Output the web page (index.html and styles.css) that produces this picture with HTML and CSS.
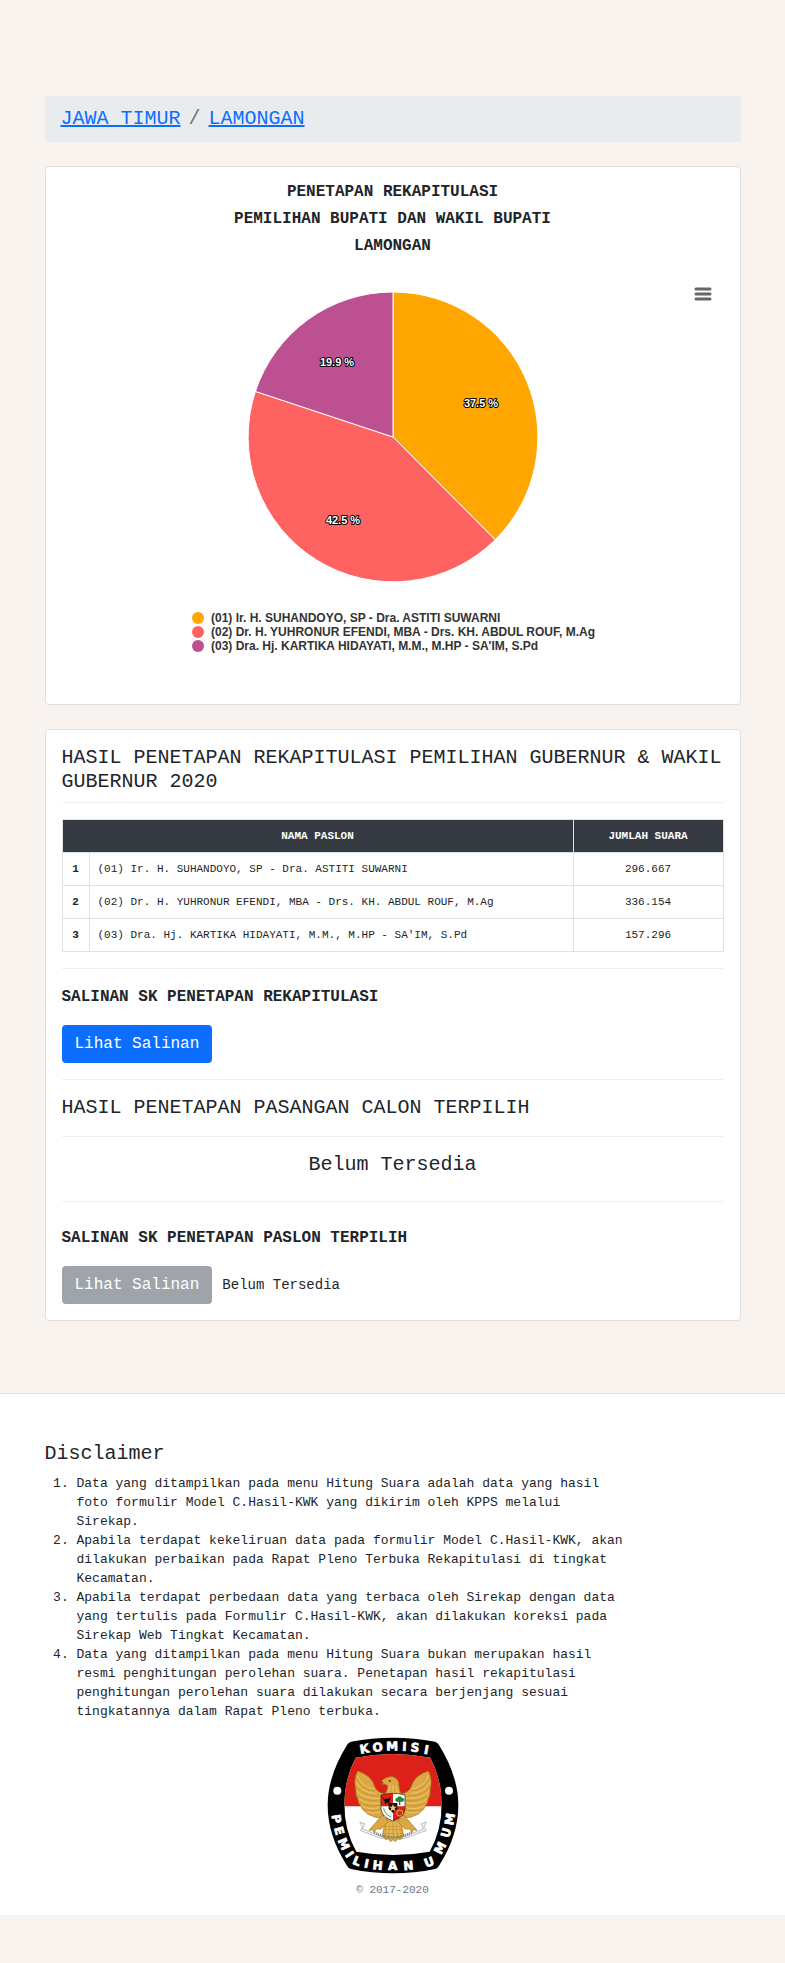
FILE: index.html
```html
<!DOCTYPE html>
<html lang="id">
<head>
<meta charset="utf-8">
<meta name="viewport" content="width=device-width, initial-scale=1">
<title>Penetapan Rekapitulasi - Lamongan</title>
<link rel="stylesheet" href="styles.css">
</head>
<body>
<main class="container main">
  <nav aria-label="breadcrumb">
    <ol class="breadcrumb">
      <li class="breadcrumb-item"><a href="#">JAWA TIMUR</a></li>
      <li class="breadcrumb-item"><a href="#">LAMONGAN</a></li>
    </ol>
  </nav>

  <section class="card">
    <div class="chart-titles">
      <h2 class="chart-title">PENETAPAN REKAPITULASI</h2>
      <h2 class="chart-title">PEMILIHAN BUPATI DAN WAKIL BUPATI</h2>
      <h2 class="chart-title">LAMONGAN</h2>
    </div>
    <div class="chart">
      <button class="chart-menu" type="button" aria-label="Menu grafik">
        <svg width="18" height="14" viewBox="0 0 18 14" stroke="#666" stroke-width="3" stroke-linecap="round"><path d="M2 2H16M2 7H16M2 12H16"/></svg>
      </button>
      <svg class="pie" width="292" height="292" viewBox="-146 -146 292 292" role="img" aria-label="Diagram perolehan suara">
        <g stroke="#fff" stroke-width="1" stroke-linejoin="round">
          <path fill="#ffa600" d="M0 0V-145A145 145 0 0 1 102.2 102.8Z"/>
          <path fill="#ff6361" d="M0 0L102.2 102.8A145 145 0 0 1 -137.6 -45.6Z"/>
          <path fill="#bc5090" d="M0 0L-137.6 -45.6A145 145 0 0 1 0 -145Z"/>
        </g>
        <g class="pie-label">
          <text x="88" y="-30">37.5 %</text>
          <text x="-50" y="87">42.5 %</text>
          <text x="-56" y="-71">19.9 %</text>
        </g>
      </svg>
      <ul class="legend">
        <li><span class="dot dot-1"></span>(01) Ir. H. SUHANDOYO, SP - Dra. ASTITI SUWARNI</li>
        <li><span class="dot dot-2"></span>(02) Dr. H. YUHRONUR EFENDI, MBA - Drs. KH. ABDUL ROUF, M.Ag</li>
        <li><span class="dot dot-3"></span>(03) Dra. Hj. KARTIKA HIDAYATI, M.M., M.HP - SA'IM, S.Pd</li>
      </ul>
    </div>
  </section>

  <section class="card">
    <h3 class="title">HASIL PENETAPAN REKAPITULASI PEMILIHAN GUBERNUR &amp; WAKIL GUBERNUR 2020</h3>
    <hr>
    <table class="votes">
      <colgroup><col class="col-no"><col><col class="col-total"></colgroup>
      <thead>
        <tr><th colspan="2" scope="col">NAMA PASLON</th><th scope="col">JUMLAH SUARA</th></tr>
      </thead>
      <tbody>
        <tr><th scope="row">1</th><td>(01) Ir. H. SUHANDOYO, SP - Dra. ASTITI SUWARNI</td><td class="total">296.667</td></tr>
        <tr><th scope="row">2</th><td>(02) Dr. H. YUHRONUR EFENDI, MBA - Drs. KH. ABDUL ROUF, M.Ag</td><td class="total">336.154</td></tr>
        <tr><th scope="row">3</th><td>(03) Dra. Hj. KARTIKA HIDAYATI, M.M., M.HP - SA'IM, S.Pd</td><td class="total">157.296</td></tr>
      </tbody>
    </table>
    <hr>
    <h4 class="subtitle">SALINAN SK PENETAPAN REKAPITULASI</h4>
    <div class="actions"><button class="btn" type="button">Lihat Salinan</button></div>
    <hr>
    <h3 class="title title-spaced">HASIL PENETAPAN PASANGAN CALON TERPILIH</h3>
    <hr>
    <p class="empty">Belum Tersedia</p>
    <hr>
    <h4 class="subtitle subtitle-spaced">SALINAN SK PENETAPAN PASLON TERPILIH</h4>
    <div class="actions">
      <button class="btn btn-secondary" type="button" disabled>Lihat Salinan</button>
      <span class="note">Belum Tersedia</span>
    </div>
  </section>
</main>

<footer class="footer">
  <div class="container">
    <h3 class="footer-title">Disclaimer</h3>
    <ol class="disclaimer">
      <li>Data yang ditampilkan pada menu Hitung Suara adalah data yang hasil foto formulir Model C.Hasil-KWK yang dikirim oleh KPPS melalui Sirekap.</li>
      <li>Apabila terdapat kekeliruan data pada formulir Model C.Hasil-KWK, akan dilakukan perbaikan pada Rapat Pleno Terbuka Rekapitulasi di tingkat Kecamatan.</li>
      <li>Apabila terdapat perbedaan data yang terbaca oleh Sirekap dengan data yang tertulis pada Formulir C.Hasil-KWK, akan dilakukan koreksi pada Sirekap Web Tingkat Kecamatan.</li>
      <li>Data yang ditampilkan pada menu Hitung Suara bukan merupakan hasil resmi penghitungan perolehan suara. Penetapan hasil rekapitulasi penghitungan perolehan suara dilakukan secara berjenjang sesuai tingkatannya dalam Rapat Pleno terbuka.</li>
    </ol>
    <div class="brand">
      <svg width="132" height="137" viewBox="20 22 396 411" role="img" aria-label="Komisi Pemilihan Umum">
        <defs>
          <clipPath id="inner"><path d="M106 84Q218 62 330 84Q364 150 364 226Q364 302 328 366Q218 386 108 366Q72 302 72 226Q72 150 106 84Z"/></clipPath>
          <clipPath id="shield"><path d="M182 196Q218 186 254 196V238Q252 262 218 274Q184 262 182 238Z"/></clipPath>
        </defs>
        <path d="M92 36Q218 12 344 36Q352 38 356 46Q414 140 414 226Q414 318 356 408Q352 416 344 418Q218 444 92 418Q84 416 80 408Q22 318 22 226Q22 140 80 46Q84 38 92 36Z"/>
        <g clip-path="url(#inner)">
          <path fill="#fff" d="M60 60H380V400H60Z"/>
          <path fill="#dc2118" d="M60 60H380V230H60Z"/>
        </g>
        <circle cx="51" cy="183" r="12" fill="#fff"/>
        <circle cx="386" cy="183" r="12" fill="#fff"/>
        <g class="logo-text">
          <text x="120.4 157.9 198 244.8 269.5 309.6" y="72.2 66.9 62.8 63.2 65.1 71.2" rotate="-10 -6 -1 3 6 10">KOMISI</text>
          <text x="33.5 40.8 51.7 73.1 94.3 129.2 155.6 202.9 250 290 317.3 362 385.2 398.3" y="257 295.3 331.6 375.8 401.5 412.9 417.9 422.5 421.6 415 414.4 376.9 326.7 287.9" rotate="80 74 66 56 22 12 6 0 -5 -10 -20 -62 -74 -80">PEMILIHAN UMUM</text>
        </g>
        <!-- ribbon -->
        <path d="M118 277L134 283L126 298L142 304Q218 344 294 304L310 298L302 283L318 277L311 292L318 303L296 310Q218 350 140 310L120 303L127 290Z" fill="#f4f4f4" stroke="#9aa3a8" stroke-width="2"/>
        <!-- wings, tail and legs -->
        <g fill="#dba842" stroke="#a8741c" stroke-width="2" stroke-linejoin="round">
          <path d="M112 124Q98 150 107 182Q104 196 113 208Q112 220 122 230Q124 240 136 247Q142 256 154 258Q162 264 178 264L192 258L194 192Q170 190 162 168Q154 138 112 124Z"/>
          <path d="M324 124Q338 150 329 182Q332 196 323 208Q324 220 314 230Q312 240 300 247Q294 256 282 258Q274 264 258 264L244 258L242 192Q266 190 274 168Q282 138 324 124Z"/>
          <path d="M196 266L186 318L196 330L206 326L210 336L218 330L226 336L230 326L240 330L250 318L240 266Z"/>
          <path d="M186 256L158 288L146 302L158 300L160 308L168 298L182 298L204 276Z"/>
          <path d="M250 256L278 288L290 302L278 300L276 308L268 298L254 298L232 276Z"/>
          <path d="M184 164L190 160L184 154Q196 140 216 141Q236 146 236 168Q236 184 246 198Q218 208 190 198Q202 184 202 168L194 164Z"/>
        </g>
        <g fill="none" stroke="#f4d789" stroke-width="2">
          <path d="M112 138Q120 170 160 178M108 156Q120 188 166 192M108 182Q128 208 178 206M114 206Q138 226 178 220M124 228Q148 242 178 234M140 246Q160 254 180 246"/>
          <path d="M324 138Q316 170 276 178M328 156Q316 188 270 192M328 182Q308 208 258 206M322 206Q298 226 258 220M312 228Q288 242 258 234M296 246Q276 254 256 246"/>
          <path d="M204 280L198 324M213 280L210 328M223 280L226 328M232 280L238 324M210 168L204 190M218 166V194M226 168L232 190"/>
        </g>
        <g fill="none" stroke="#a8741c" stroke-width="1">
          <path d="M110 146Q120 178 162 184M106 170Q124 198 172 199M112 196Q132 216 178 213M118 218Q144 234 178 227M130 238Q152 250 180 240"/>
          <path d="M326 146Q316 178 274 184M330 170Q312 198 264 199M324 196Q304 216 258 213M318 218Q292 234 258 227M306 238Q284 250 256 240"/>
          <path d="M190 300H246M188 312H248M198 290H238"/>
        </g>
        <circle cx="208" cy="154" r="3" fill="#5b3608"/>
        <!-- shield -->
        <g clip-path="url(#shield)">
          <path fill="#fff" d="M180 186H256V276H180Z"/>
          <path fill="#dc2118" d="M180 186H218V230H180ZM218 230H256V276H218Z"/>
          <path fill="#16100c" d="M186 202L192 208L198 206L202 209L212 202L208 212L206 222L200 218L196 226L192 214Z"/>
          <path fill="#6b4420" d="M236 214H240V226H236Z"/>
          <path fill="#258b3c" d="M226 214Q222 206 231 204Q238 196 245 204Q254 206 250 214Q244 219 238 215Q231 219 226 214Z"/>
          <circle cx="238" cy="250" r="9" fill="none" stroke="#e8b93c" stroke-width="3"/>
          <path d="M190 236Q194 254 212 262" fill="none" stroke="#58a04b" stroke-width="4" stroke-dasharray="4 2"/>
          <path d="M205 220H231V238L218 250L205 238Z" fill="#111"/>
          <path d="M218 222L221 231H230L223 236L226 245L218 240L210 245L213 236L206 231H215Z" fill="#f2cf55"/>
        </g>
        <path d="M182 196Q218 186 254 196V238Q252 262 218 274Q184 262 182 238Z" fill="none" stroke="#1d1a18" stroke-width="2"/>
        <path d="M162 308Q218 338 274 308" fill="none" stroke="#6b6b6b" stroke-width="7" stroke-dasharray="3 3"/>
      </svg>
    </div>
    <p class="copyright">© 2017-2020</p>
  </div>
</footer>
</body>
</html>
```
FILE: styles.css
```css
*,
*::before,
*::after {
  box-sizing: border-box;
}

body {
  margin: 0;
  background: #f8f3ef;
  color: #212529;
  font-family: "Liberation Mono", "Courier New", monospace;
  font-size: 16px;
  line-height: 24px;
}

h2,
h3,
h4,
p,
ol,
ul {
  margin: 0;
  padding: 0;
}

.container {
  max-width: 720px;
  margin: 0 auto;
  padding: 0 12px;
}

.main {
  padding-top: 96px;
  padding-bottom: 72px;
  display: flex;
  flex-direction: column;
  gap: 24px;
}

.breadcrumb {
  display: flex;
  flex-wrap: wrap;
  padding: 8px 16px;
  list-style: none;
  background: #e9ecef;
  border-radius: 4px;
  font-size: 20px;
  line-height: 30px;
}

.breadcrumb-item + .breadcrumb-item::before {
  content: "/";
  padding: 0 8px;
  color: #6c757d;
}

.breadcrumb a {
  color: #0d6efd;
  text-decoration: underline;
}

.card {
  padding: 16px;
  background: #fff;
  border: 1px solid #dfdfdf;
  border-radius: 4px;
}

.chart-title {
  margin-bottom: 8px;
  font-size: 16px;
  line-height: 19px;
  text-align: center;
}

.chart {
  position: relative;
  display: flex;
  flex-direction: column;
  align-items: center;
  gap: 28px;
  padding: 27px 0 35px;
  font-family: "Liberation Sans", Arial, sans-serif;
}

.chart-menu {
  position: absolute;
  top: 20px;
  right: 9px;
  display: flex;
  align-items: center;
  justify-content: center;
  width: 24px;
  height: 20px;
  padding: 0;
  border: 0;
  background: transparent;
}

.pie {
  display: block;
}

.pie-label {
  fill: #fff;
  stroke: #000;
  stroke-width: 2px;
  stroke-linejoin: round;
  paint-order: stroke;
  font-size: 11px;
  font-weight: 700;
  text-anchor: middle;
}

.legend {
  padding-left: 2px;
  list-style: none;
  color: #333;
  font-size: 12px;
  font-weight: 700;
  line-height: 14px;
}

.legend li {
  display: flex;
  align-items: center;
  gap: 7px;
}

.dot {
  width: 12px;
  height: 12px;
  flex: none;
  border-radius: 50%;
}

.dot-1 {
  background: #ffa600;
}

.dot-2 {
  background: #ff6361;
}

.dot-3 {
  background: #bc5090;
}

.title,
.footer-title {
  margin-bottom: 8px;
  font-size: 20px;
  font-weight: 400;
  line-height: 24px;
}

.title-spaced {
  margin-bottom: 16px;
}

hr {
  height: 1px;
  margin: 0 0 16px;
  border: 0;
  background: #f0f0f1;
}

.votes {
  width: 100%;
  margin-bottom: 16px;
  border-collapse: collapse;
  table-layout: fixed;
  font-size: 11px;
  line-height: 16px;
}

.col-no {
  width: 27px;
}

.col-total {
  width: 150px;
}

.votes th,
.votes td {
  padding: 8px;
  border: 1px solid #dee2e6;
  text-align: left;
}

.votes th,
.votes .total {
  text-align: center;
}

.votes thead th {
  background: #343a40;
  color: #fff;
}

.subtitle {
  margin-bottom: 16px;
  font-size: 16px;
  line-height: 24px;
}

.subtitle-spaced {
  margin-top: 24px;
}

.actions {
  display: flex;
  align-items: center;
  gap: 10px;
}

.actions + hr {
  margin-top: 16px;
}

.btn {
  padding: 6px 12px;
  border: 1px solid transparent;
  border-radius: 4px;
  background: #0d6efd;
  background-clip: border-box;
  color: #fff;
  font-family: inherit;
  font-size: 16px;
  line-height: 24px;
}

.btn-secondary {
  background: #6c757d;
  opacity: 0.65;
}

.note {
  font-size: 14px;
}

.empty {
  margin-bottom: 24px;
  font-size: 20px;
  text-align: center;
}

.footer {
  padding: 48px 0 16px;
  border-top: 1px solid #dee2e6;
  background: #fff;
}

.disclaimer {
  max-width: 582px;
  margin-bottom: 16px;
  padding-left: 32px;
  font-size: 13px;
  line-height: 19px;
}

.brand {
  display: flex;
  justify-content: center;
  margin-bottom: 8px;
}

.logo-text {
  fill: #fff;
  stroke: #fff;
  stroke-width: 2px;
  font-family: "DejaVu Sans", Verdana, sans-serif;
  font-size: 36px;
  font-weight: 700;
}

.copyright {
  color: #6c757d;
  font-size: 11px;
  line-height: 17px;
  text-align: center;
}
```
